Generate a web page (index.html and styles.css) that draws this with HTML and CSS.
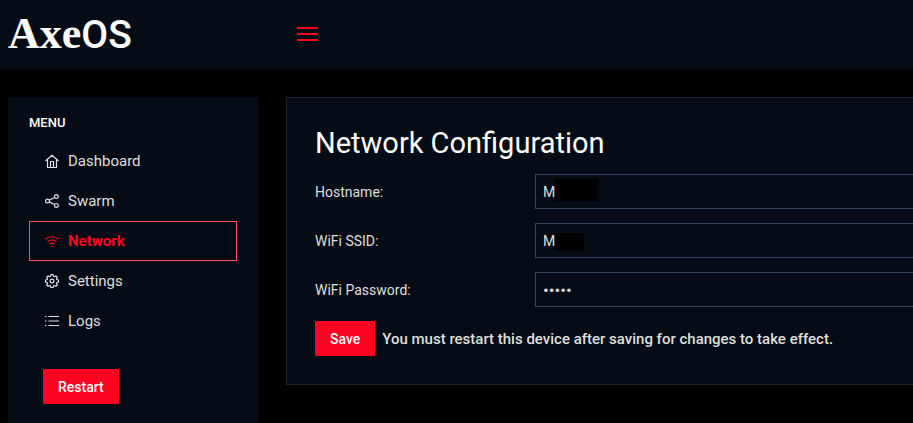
FILE: index.html
```html
<!DOCTYPE html>
<html lang="en">
<head>
  <meta charset="UTF-8">
  <meta name="viewport" content="width=device-width, initial-scale=1.0">
  <title>AxeOS</title>
  <link rel="stylesheet" href="styles.css">
</head>
<body>
  <header class="topbar">
    <a class="logo" href="#"><span class="logo-axe">Axe</span><span class="logo-os">OS</span></a>
    <button class="menu-toggle" type="button" aria-label="Toggle menu">
      <svg width="22" height="16" viewBox="0 0 22 16" fill="none" stroke="currentColor" stroke-width="2">
        <path d="M0 2h21M0 8h21M0 14h21"/>
      </svg>
    </button>
  </header>

  <div class="layout">
    <nav class="sidebar">
      <h2 class="menu-title">MENU</h2>
      <ul class="menu">
        <li>
          <a href="#">
            <svg class="icon" viewBox="0 0 14 14"><path d="M.5 7 7 1.200 13.500 7M2.500 5.600v7.900h9V5.600M5.500 13.200V7.500h3v5.700"/></svg>
            Dashboard
          </a>
        </li>
        <li>
          <a href="#">
            <svg class="icon" viewBox="0 0 14 14"><circle cx="2.500" cy="7" r="1.900"/><circle cx="11.400" cy="2.600" r="1.900"/><circle cx="11.400" cy="11.400" r="1.900"/><path d="m4.300 6.100 5.300-2.600M4.300 7.900l5.300 2.600"/></svg>
            Swarm
          </a>
        </li>
        <li>
          <a class="active" href="#">
            <svg class="icon" viewBox="0 0 14 14"><path d="M.4 5.300c3.800-3.400 9.400-3.400 13.200 0M2.500 7.800c2.600-2.300 6.400-2.300 9 0M4.700 10.200c1.400-1.200 3.200-1.200 4.600 0M6.300 12.300h1.400"/></svg>
            Network
          </a>
        </li>
        <li>
          <a href="#">
            <svg class="icon" viewBox="0 0 14 14"><circle cx="7" cy="7" r="1.900"/><path d="M5.900.6h2.200l.4 1.700 1 .4 1.500-.9 1.300 1.300-.9 1.500.4 1 1.700.4v2.200l-1.700.4-.4 1 .9 1.500-1.300 1.300-1.500-.9-1 .4-.4 1.600H5.900l-.4-1.600-1-.4-1.500.9-1.300-1.300.9-1.500-.4-1L.5 8.200V6l1.700-.4.4-1-.9-1.500L3 1.800l1.500.9 1-.4z"/></svg>
            Settings
          </a>
        </li>
        <li>
          <a href="#">
            <svg class="icon" viewBox="0 0 14 14"><path d="M0 2.500h1.500M3.500 2.500H14M0 7h1.500M3.500 7H14M0 11.500h1.500M3.500 11.500H14"/></svg>
            Logs
          </a>
        </li>
      </ul>
      <button class="btn btn-restart" type="button">Restart</button>
    </nav>

    <main class="card">
      <h1>Network Configuration</h1>
      <form class="network-form">
        <div class="field">
          <label for="hostname">Hostname:</label>
          <div class="control">
            <input id="hostname" type="text" value="M">
            <span class="mask mask-host"></span>
          </div>
        </div>
        <div class="field">
          <label for="ssid">WiFi SSID:</label>
          <div class="control">
            <input id="ssid" type="text" value="M">
            <span class="mask mask-ssid"></span>
          </div>
        </div>
        <div class="field">
          <label for="password">WiFi Password:</label>
          <div class="control">
            <input id="password" type="password" value="admin">
          </div>
        </div>
        <div class="actions">
          <button class="btn" type="button">Save</button>
          <b>You must restart this device after saving for changes to take effect.</b>
        </div>
      </form>
    </main>
  </div>
</body>
</html>
```
FILE: styles.css
```css
* { margin: 0; padding: 0; box-sizing: border-box; }
body {
  display: flex;
  flex-direction: column;
  min-height: 100vh;
  background-color: #000;
  color: #dedede;
  font-family: Roboto, "Liberation Sans", sans-serif;
  font-size: 14px;
  line-height: 20px;
}
button, input { font: inherit; color: inherit; }

/* Top bar */
.topbar {
  display: flex;
  align-items: center;
  height: 69px;
  padding: 0 8px 1px;
  background-color: #060c15;
}
.logo {
  display: flex;
  align-items: baseline;
  width: 289px;
  color: #fff;
  line-height: 60px;
  text-decoration: none;
}
.logo-axe {
  font-family: "Liberation Serif", serif;
  font-size: 44px;
  font-weight: bold;
}
.logo-os {
  font-size: 39px;
  font-weight: 500;
}
.menu-toggle {
  display: flex;
  border: none;
  background: none;
  color: #fc0320;
  cursor: pointer;
}

.layout {
  display: flex;
  flex: 1;
  gap: 28px;
  align-items: flex-start;
  padding: 28px 0 0 8px;
}

/* Sidebar */
.sidebar {
  flex: 0 0 250px;
  align-self: stretch;
  padding: 16px 21px;
  background-color: #060c15;
}
.menu-title {
  margin-bottom: 8px;
  color: #fff;
  font-size: 13px;
  font-weight: 500;
}
.menu {
  margin-bottom: 28px;
  list-style: none;
}
.menu a {
  display: flex;
  align-items: center;
  gap: 9px;
  height: 40px;
  padding: 0 15px;
  border: 1px solid transparent;
  color: inherit;
  font-size: 15px;
  text-decoration: none;
}
.menu a.active {
  border-color: #fd4f62;
  color: #fc0320;
  font-weight: 700;
}
.icon {
  width: 14px;
  height: 14px;
  fill: none;
  stroke: currentColor;
  stroke-width: 1.2;
  stroke-linejoin: round;
}
.btn {
  height: 35px;
  padding: 0 15px;
  border: none;
  background-color: #fc0320;
  color: #fff;
  font-weight: 500;
  cursor: pointer;
}
.btn-restart { margin-left: 14px; }

/* Network form */
.card {
  flex: 1;
  padding: 28px;
  padding-right: 0;
  border: 1px solid #17222c;
  border-right: none;
  background-color: #060c15;
}
.card h1 {
  margin-bottom: 14px;
  color: #fff;
  font-size: 29px;
  font-weight: 400;
  line-height: 34px;
}
.network-form {
  display: flex;
  flex-direction: column;
  gap: 14px;
}
.field {
  display: flex;
  align-items: center;
}
.field label { flex: 0 0 220px; }
.control {
  position: relative;
  flex: 1;
}
.control input {
  display: block;
  width: 100%;
  height: 35px;
  padding: 0 7px;
  border: 1px solid #304562;
  border-right: none;
  background-color: #060c15;
}
.control input[type="password"] { font-size: 17px; }
.mask {
  position: absolute;
  left: 20px;
  background-color: #000;
}
.mask-host {
  top: 5px;
  width: 44px;
  height: 22px;
}
.mask-ssid {
  top: 10px;
  width: 29px;
  height: 18px;
}
.actions {
  display: flex;
  align-items: center;
  gap: 7px;
}
.actions b {
  font-size: 15px;
  font-weight: 500;
}
```
